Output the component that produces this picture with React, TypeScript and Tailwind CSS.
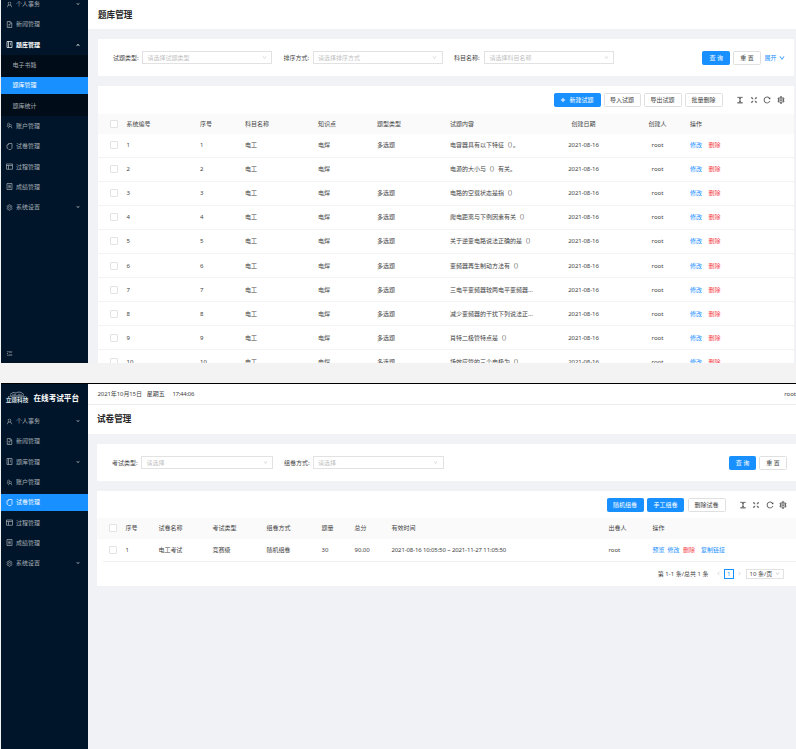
import type { ReactNode } from "react";
import {
  AiOutlineUser,
  AiOutlineTeam,
  AiOutlineSetting,
  AiOutlineMenuFold,
  AiOutlineColumnHeight,
  AiOutlineFullscreen,
  AiOutlineReload,
  AiOutlineDown,
  AiOutlineUp,
  AiOutlineLeft,
  AiOutlineRight,
  AiOutlinePlus,
} from "react-icons/ai";

type Item = { label: string; icon?: ReactNode; arrow?: "up" | "down"; active?: boolean; bold?: boolean; sub?: boolean };

// Small outline glyphs for the sidebar, drawn on a 14-unit grid.
function Glyph({ d }: { d: string }) {
  return (
    <svg width="7" height="7" viewBox="0 0 14 14" fill="none" stroke="currentColor" strokeWidth="1.4">
      <path d={d} />
    </svg>
  );
}

const fileIcon = <Glyph d="M2.5 1H8.5L11.5 4V13H2.5ZM8 1V4.5H11.5M5 7H9M5 10H8" />;
const bookIcon = <Glyph d="M2 1H12V13H2ZM5 1V13M8 4.5H10M8 7.5H10" />;
const paperIcon = <Glyph d="M5 1H12V10.5L9.5 13H5M5 3.5H2V10.5H4.5M5 1V3.5" />;
const layoutIcon = <Glyph d="M1 2H13V12.5H1ZM1 5H13M5 5V12.5" />;
const profileIcon = <Glyph d="M2 1H12V13H2ZM4.5 4.5H9.5M4.5 7H9.5M4.5 9.5H9.5" />;

const user: Item = { label: "个人事务", icon: <AiOutlineUser />, arrow: "down" };
const news: Item = { label: "新闻管理", icon: fileIcon };
const account: Item = { label: "账户管理", icon: <AiOutlineTeam /> };
const paper: Item = { label: "试卷管理", icon: paperIcon };
const process: Item = { label: "过程管理", icon: layoutIcon };
const score: Item = { label: "成绩管理", icon: profileIcon };
const system: Item = { label: "系统设置", icon: <AiOutlineSetting />, arrow: "down" };

const menuA: Item[] = [
  user,
  news,
  { label: "题库管理", icon: bookIcon, arrow: "up", bold: true },
  { label: "电子书籍", sub: true },
  { label: "题库管理", sub: true, active: true },
  { label: "题库统计", sub: true },
  account,
  paper,
  process,
  score,
  system,
];
const menuB: Item[] = [
  user,
  news,
  { label: "题库管理", icon: bookIcon, arrow: "down" },
  account,
  { ...paper, active: true },
  process,
  score,
  system,
];

function Menu({ items }: { items: Item[] }) {
  return (
    <ul>
      {items.map((it, i) => (
        <li key={i} className={`flex h-[20.3px] items-center ${it.sub ? "bg-[#000c17]" : ""}`}>
          <div
            className={`flex h-[17px] w-full items-center ${it.sub ? "pl-[11.5px]" : "pl-[4.5px]"} ${
              it.active ? "bg-[#1890ff] text-white" : it.bold ? "font-bold text-white" : "text-[#a6adb4]"
            }`}
          >
            {it.icon && <span className="mr-[3.5px] text-[7px]">{it.icon}</span>}
            <span>{it.label}</span>
            {it.arrow && (
              <span className="ml-auto mr-[8px] text-[4px]">
                {it.arrow === "up" ? <AiOutlineUp strokeWidth={60} /> : <AiOutlineDown strokeWidth={60} />}
              </span>
            )}
          </div>
        </li>
      ))}
    </ul>
  );
}

function Select({ label, hint, className, box }: { label: string; hint: string; className: string; box: string }) {
  return (
    <div className={`flex items-center ${className}`}>
      <span className="mr-auto">{label}:</span>
      <div className={`flex h-[13px] items-center justify-between border border-[#e2e2e2] px-[4.5px] text-[#bfbfbf] ${box}`}>
        {hint}
        <AiOutlineDown className="text-[5px]" />
      </div>
    </div>
  );
}

function Btn({ children, primary, w }: { children: ReactNode; primary?: boolean; w: string }) {
  return (
    <div
      className={`flex h-[14px] shrink-0 items-center justify-center rounded-[1.5px] border ${w} ${
        primary ? "border-[#1890ff] bg-[#1890ff] text-white" : "border-[#e0e0e0] bg-white text-[#444]"
      }`}
    >
      {children}
    </div>
  );
}

function Tools() {
  return (
    <div className="flex items-center gap-[5.5px] text-[8px] text-[#333]">
      <AiOutlineColumnHeight strokeWidth={20} />
      <AiOutlineFullscreen strokeWidth={20} />
      <AiOutlineReload strokeWidth={20} />
      <AiOutlineSetting strokeWidth={20} />
    </div>
  );
}

const Box = () => <span className="block size-[8px] rounded-[1px] border border-[#e3e3e3] bg-white" />;

const gridA =
  "grid grid-cols-[16.5px_73.5px_45px_73px_59px_73px_92px_83px_65px_1fr] items-center whitespace-nowrap";
const gridB =
  "grid grid-cols-[16.5px_33px_54px_54px_55px_33px_37px_217px_44px_1fr] items-center whitespace-nowrap";

const headA = ["系统编号", "序号", "科目名称", "知识点", "题型类型", "试题内容", "创建日期", "创建人", "操作"];
const headB = ["序号", "试卷名称", "考试类型", "组卷方式", "题量", "总分", "有效时间", "出卷人", "操作"];

const rows: [string, string][] = [
  ["电容器具有以下特征（）。", "多选题"],
  ["电源的大小与（）有关。", ""],
  ["电路的空载状态是指（）", "多选题"],
  ["爬电距离与下例因素有关（）", "多选题"],
  ["关于逆变电路说法正确的是（）", "多选题"],
  ["变频器再生制动方法有（）", "多选题"],
  ["三电平变频器较两电平变频器...", "多选题"],
  ["减少变频器的干扰下列说法正...", "多选题"],
  ["肖特二极管特点是（）", "多选题"],
  ["场效应管的三个电极为（）", "多选题"],
];

function QuestionBank() {
  return (
    <section className="flex h-[363px] overflow-hidden pl-px">
      <aside className="flex w-[87px] shrink-0 flex-col justify-between bg-[#001529]">
        <div className="-mt-[6px]">
          <Menu items={menuA} />
        </div>
        <div className="flex h-[20px] items-center pl-[5px] text-[7px] text-[#8b949e]">
          <AiOutlineMenuFold />
        </div>
      </aside>
      <main className="min-w-0 flex-1 bg-[#f0f2f5]">
        <h1 className="flex h-[29px] items-center bg-white pl-[10px] text-[8.6px] font-bold text-[#262626]">题库管理</h1>
        <div className="ml-[10px] mr-[2px] mt-[10px] flex h-[37px] items-center bg-white pl-[15px]">
          <Select className="w-[159px]" box="w-[130px]" label="试题类型" hint="请选择试题类型" />
          <Select className="ml-[11.5px] w-[159px]" box="w-[130px]" label="排序方式" hint="请选择排序方式" />
          <Select className="ml-[11.5px] w-[160px]" box="w-[130px]" label="科目名称" hint="请选择科目名称" />
          <div className="ml-auto mr-[9.5px] flex items-center gap-[3px]">
            <Btn w="w-[27.5px]" primary>查 询</Btn>
            <Btn w="w-[28px]">重 置</Btn>
            <span className="ml-[0.5px] flex items-center gap-[2px] text-[#1890ff]">
              展开 <AiOutlineDown className="text-[6px]" strokeWidth={40} />
            </span>
          </div>
        </div>
        <div className="ml-[10px] mr-[2px] mt-[10px] h-[290px] bg-white">
          <div className="flex h-[27.5px] items-center justify-end gap-[3px] pr-[9.5px]">
            <Btn w="w-[47px]" primary>
              <AiOutlinePlus className="mr-[3px] text-[6px]" strokeWidth={60} />
              新建试题
            </Btn>
            <Btn w="w-[37px]">导入试题</Btn>
            <Btn w="w-[38px]">导出试题</Btn>
            <Btn w="w-[38px]">批量删除</Btn>
            <div className="ml-[10.5px]">
              <Tools />
            </div>
          </div>
          <div className={`h-[20px] bg-[#fafafa] pl-[12px] ${gridA}`}>
            <Box />
            {headA.map((t, i) => (
              <span key={t} className={i === 6 || i === 7 ? "text-center" : ""}>{t}</span>
            ))}
          </div>
          {rows.map(([text, type], i) => (
            <div key={i} className={`h-[24.1px] border-b border-[#f3f3f3] pl-[12px] ${gridA}`}>
              <Box />
              <span>{i + 1}</span>
              <span>{i + 1}</span>
              <span>电工</span>
              <span>电焊</span>
              <span>{type}</span>
              <span>{text}</span>
              <span className="text-center tracking-[-0.08px]">2021-08-16</span>
              <span className="text-center">root</span>
              <span className="flex gap-[6.5px]">
                <span className="text-[#1890ff]">修改</span>
                <span className="text-[#f5454d]">删除</span>
              </span>
            </div>
          ))}
        </div>
      </main>
    </section>
  );
}

function Logo() {
  return (
    <div className="flex h-[27px] items-center pl-[4px] text-white">
      <div className="flex w-[24px] flex-col items-center">
        <svg width="19" height="6" viewBox="0 0 19 6" fill="none" stroke="#c3ccd6">
          <path d="M1 6V5M3 6V4.2M5 6V3.4M7 6V2.8M9 6V4M11 6V2.8M13 6V3.4M15 6V4.2M17 6V5" strokeWidth="0.9" />
          <path d="M2 3.5Q5 0.2 8 2M8 2Q12 -0.6 16 3.8" strokeWidth="0.6" />
        </svg>
        <span className="whitespace-nowrap text-[5.7px] font-bold leading-[7px] text-[#dbe0e6]">立颂科技</span>
      </div>
      <span className="ml-[4.5px] whitespace-nowrap text-[7.6px] font-bold">在线考试平台</span>
    </div>
  );
}

function Papers() {
  return (
    <section className="flex h-[366px] overflow-hidden pl-px">
      <div className="flex flex-1 border-t border-black">
        <aside className="w-[87px] shrink-0 bg-[#001529]">
          <Logo />
          <Menu items={menuB} />
        </aside>
        <main className="min-w-0 flex-1 bg-[#f0f2f5]">
          <div className="flex h-[20.5px] items-center border-b border-[#ececec] bg-white pl-[9.5px]">
            <span className="tracking-[-0.1px]">2021年10月15日</span>
            <span className="ml-[5px]">星期五</span>
            <span className="ml-[7.5px] tracking-[-0.25px]">17:44:06</span>
            <span className="ml-auto">root</span>
          </div>
          <h1 className="flex h-[29.5px] items-center bg-white pl-[9px] text-[8.6px] font-bold text-[#262626]">试卷管理</h1>
          <div className="ml-[9px] mt-[10px] flex h-[37px] items-center bg-white pl-[15px]">
            <Select className="w-[161px]" box="w-[132px]" label="考试类型" hint="请选择" />
            <Select className="ml-[11px] w-[159.5px]" box="w-[131px]" label="组卷方式" hint="请选择" />
            <div className="ml-auto mr-[9px] flex items-center gap-[3px]">
              <Btn w="w-[27px]" primary>查 询</Btn>
              <Btn w="w-[28px]">重 置</Btn>
            </div>
          </div>
          <div className="ml-[9px] mt-[10px] h-[94.5px] bg-white">
            <div className="flex h-[27px] items-center justify-end gap-[3.5px] pr-[9px]">
              <Btn w="w-[37px]" primary>随机组卷</Btn>
              <Btn w="w-[37px]" primary>手工组卷</Btn>
              <Btn w="w-[38px]">删除试卷</Btn>
              <div className="ml-[9.5px]">
                <Tools />
              </div>
            </div>
            <div className={`h-[20.5px] bg-[#fafafa] pl-[12px] ${gridB}`}>
              <Box />
              {headB.map((t) => (
                <span key={t}>{t}</span>
              ))}
            </div>
            <div className={`ml-[6px] h-[23px] border-b border-[#efefef] pl-[6px] ${gridB}`}>
              <Box />
              {["1", "电工考试", "竞赛级", "随机组卷", "30", "90.00"].map((t) => (
                <span key={t} className="tracking-[-0.05px]">{t}</span>
              ))}
              <span className="tracking-[-0.13px]">2021-08-16 10:05:50 ~ 2021-11-27 11:05:50</span>
              <span>root</span>
              <span className="flex text-[#1890ff]">
                预览<span className="ml-[3px]">修改</span>
                <span className="ml-[3.5px] text-[#f5454d]">删除</span>
                <span className="ml-[6px]">复制链接</span>
              </span>
            </div>
            <div className="flex h-[24px] items-center justify-end pr-[12px]">
              <span>第 1-1 条/总共 1 条</span>
              <AiOutlineLeft className="ml-[7px] text-[5px] text-[#bbb]" />
              <span className="ml-[3px] flex h-[10px] w-[10.5px] items-center justify-center border border-[#1890ff] text-[#1890ff]">1</span>
              <AiOutlineRight className="ml-[3px] text-[5px] text-[#bbb]" />
              <span className="ml-[3.5px] flex h-[10px] w-[38.5px] items-center justify-between border border-[#e2e2e2] px-[3px]">
                10 条/页 <AiOutlineDown className="text-[5px] text-[#aaa]" />
              </span>
            </div>
          </div>
        </main>
      </div>
    </section>
  );
}

export default function App() {
  return (
    <div className="h-[749px] w-[796px] overflow-hidden bg-[#f3f3f3] font-['Noto_Sans','Noto_Sans_CJK_SC',sans-serif] text-[6px] leading-[10px] text-[#444]">
      <QuestionBank />
      <div className="h-[20px]" />
      <Papers />
    </div>
  );
}
